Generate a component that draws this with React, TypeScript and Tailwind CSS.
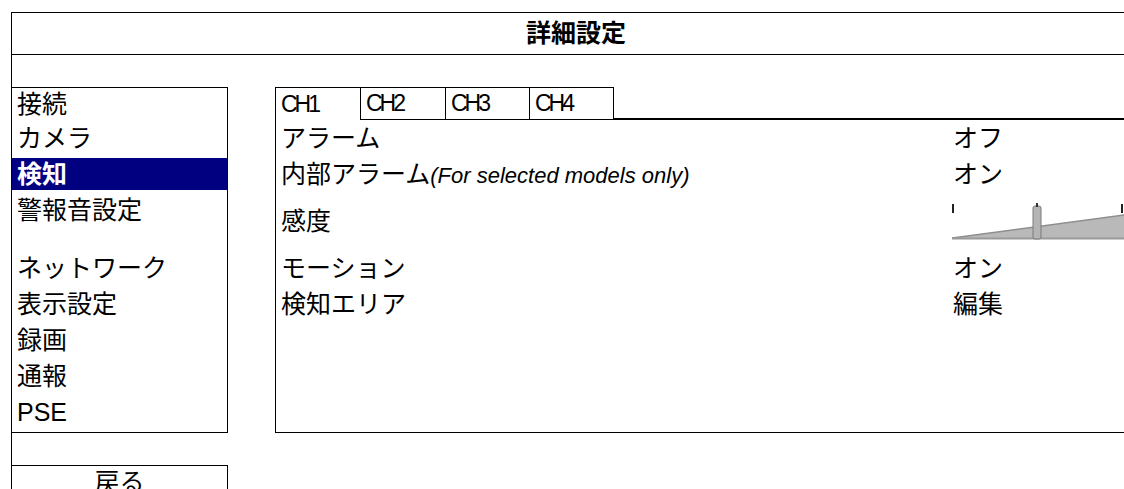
const menu = [
  { label: "接続", h: "h-[32px]" },
  { label: "カメラ", h: "h-[36px]" },
  { label: "検知", h: "h-[36px]", active: true },
  { label: "警報音設定", h: "h-[36px]" },
  { label: "", h: "h-[22px]" },
  { label: "ネットワーク", h: "h-[36px]" },
  { label: "表示設定", h: "h-[36px]" },
  { label: "録画", h: "h-[36px]" },
  { label: "通報", h: "h-[36px]" },
  { label: "PSE", h: "h-[36px]" },
];

const tabs = [
  { label: "CH1", w: "w-[85px]", active: true },
  { label: "CH2", w: "w-[85px]" },
  { label: "CH3", w: "w-[84px]" },
  { label: "CH4", w: "w-[84px]" },
];

function Sensitivity() {
  return (
    <svg width="180" height="37" viewBox="0 0 180 37" className="block">
      {/* ramp */}
      <polygon points="0,35 180,11 180,36 0,36" fill="#b9b9b9" />
      <line x1="0" y1="35" x2="180" y2="11" stroke="#8e8e8e" strokeWidth="1.5" />
      <line x1="0" y1="35.5" x2="180" y2="35.5" stroke="#9a9a9a" strokeWidth="2" />
      {/* ticks */}
      <rect x="0" y="1" width="2" height="9" fill="#222" />
      <rect x="169" y="1" width="2" height="9" fill="#222" />
      {/* handle */}
      <rect x="81" y="3" width="8" height="33" rx="2" fill="#b4b4b4" stroke="#7a7a7a" strokeWidth="1" />
      <rect x="84" y="0" width="2" height="4" fill="#333" />
    </svg>
  );
}

export default function App() {
  return (
    <div className="w-[1124px] h-[489px] overflow-hidden bg-white text-black font-['Liberation_Sans','Noto_Sans_CJK_JP',sans-serif]">
      <div className="ml-[11px] mt-[12px] w-[1130px] h-[500px] border-l border-t border-r border-black flex flex-col">
        {/* Header */}
        <div className="h-[42px] border-b border-black flex items-center justify-center text-[25px] font-bold leading-none">
          詳細設定
        </div>

        <div className="flex pt-[32px]">
          {/* Left menu */}
          <div className="w-[216px] flex flex-col">
            <div className="h-[346px] border-t border-r border-b border-black flex flex-col">
              {menu.map((m, i) =>
                m.active ? (
                  <div key={i} className={`${m.h} flex items-center`}>
                    <div className="h-[32px] w-full bg-[#000080] text-white font-bold text-[25px] leading-none flex items-center pl-[5px]">
                      {m.label}
                    </div>
                  </div>
                ) : (
                  <div key={i} className={`${m.h} flex items-center pl-[5px] text-[25px] leading-none`}>
                    {m.label}
                  </div>
                )
              )}
            </div>
            <div className="mt-[32px] h-[40px] border-t border-r border-black flex justify-center items-start">
              <div className="h-[32px] flex items-center text-[25px] leading-none">戻る</div>
            </div>
          </div>

          {/* Right panel */}
          <div className="ml-[47px] flex-1 h-[346px] border-l border-b border-black flex flex-col">
            <div className="flex h-[33px]">
              {tabs.map((t) => (
                <div
                  key={t.label}
                  className={`${t.w} h-[33px] border-t border-r border-black flex items-center pl-[5px] text-[23px] tracking-[-3px] leading-none ${t.active ? "" : "border-b"}`}
                >
                  {t.label}
                </div>
              ))}
              <div className="flex-1 border-b-2 border-black" />
            </div>

            <div className="flex h-[36px] items-center text-[25px] leading-none">
              <div className="w-[677px] pl-[5px]">アラーム</div>
              <div>オフ</div>
            </div>
            <div className="flex h-[36px] items-center text-[25px] leading-none">
              <div className="w-[677px] pl-[5px] flex items-end">
                内部アラーム
                <span className="italic text-[22px]">(For selected models only)</span>
              </div>
              <div>オン</div>
            </div>
            <div className="flex h-[58px] items-center text-[25px] leading-none">
              <div className="w-[676px] pl-[5px]">感度</div>
              <Sensitivity />
            </div>
            <div className="flex h-[36px] items-center text-[25px] leading-none">
              <div className="w-[677px] pl-[5px]">モーション</div>
              <div>オン</div>
            </div>
            <div className="flex h-[36px] items-center text-[25px] leading-none">
              <div className="w-[677px] pl-[5px]">検知エリア</div>
              <div>編集</div>
            </div>
          </div>
        </div>
      </div>
    </div>
  );
}
